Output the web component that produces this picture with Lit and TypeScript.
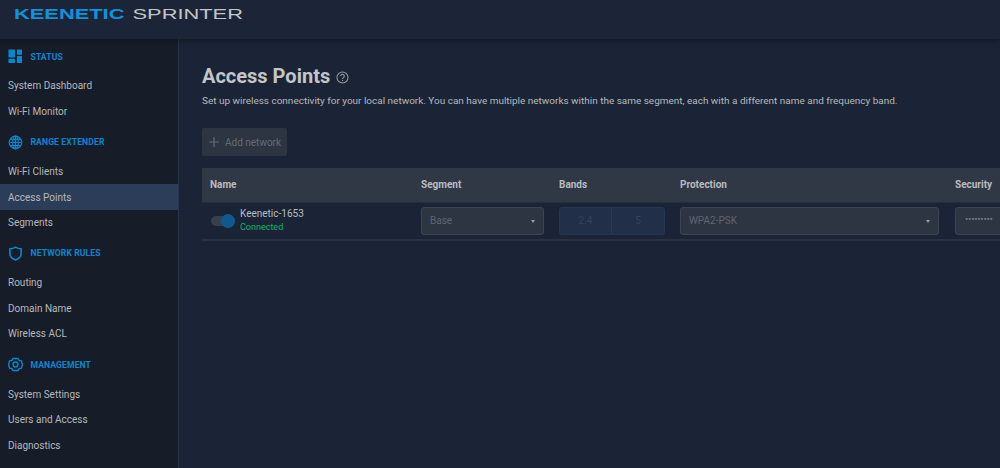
import { LitElement, html, css, svg } from "lit";
import { customElement } from "lit/decorators.js";

const icons: Record<string, unknown> = {
  status: svg`<path d="M.5 .5h7v8.500h-7zM9.500 .5h5.500v5.500H9.500zM.5 10.500h7v4.500h-7zM9.500 7.500h5.500V15H9.500z" fill="currentColor"/>`,
  globe: svg`<g fill="none" stroke="currentColor" stroke-width="1.300"><circle cx="8" cy="8" r="6.700"/><ellipse cx="8" cy="8" rx="3" ry="6.700"/><path d="M8 1.300v13.400M1.300 8h13.400M2.200 4.700h11.600M2.200 11.300h11.600"/></g>`,
  shield: svg`<path d="M8 1.200c1.800 1.200 3.800 1.800 6 1.900v5c0 3.400-2.400 5.600-6 6.900-3.600-1.300-6-3.500-6-6.900v-5c2.200-.1 4.200-.7 6-1.900z" fill="none" stroke="currentColor" stroke-width="1.700"/>`,
  gear: svg`<g fill="none" stroke="currentColor" stroke-width="1.500"><path d="M5.200 1.600h5.600l1.200 2.200 2.400.3L15.300 8l-.9 3.900-2.400.3-1.200 2.200H5.200L4 12.200l-2.400-.3L.7 8l.9-3.900L4 3.800z" stroke-linejoin="round"/><circle cx="8" cy="8" r="2.600"/></g>`,
};

const nav = [
  { icon: "status", title: "STATUS", items: ["System Dashboard", "Wi-Fi Monitor"] },
  { icon: "globe", title: "RANGE EXTENDER", items: ["Wi-Fi Clients", "Access Points", "Segments"] },
  { icon: "shield", title: "NETWORK RULES", items: ["Routing", "Domain Name", "Wireless ACL"] },
  { icon: "gear", title: "MANAGEMENT", items: ["System Settings", "Users and Access", "Diagnostics"] },
];

@customElement("app-root")
export class AppRoot extends LitElement {
  static styles = css`
    :host { display: block; width: 1000px; height: 468px; overflow: hidden; font-family: Roboto, "Liberation Sans", sans-serif; background: #1a2436; color: #c3c5c8; }
    .header { height: 39px; background: #1b2537; box-shadow: 0 2px 6px rgba(0,0,0,.3); position: relative; z-index: 1; padding: 6px 0 0 14px; box-sizing: border-box; display: flex; gap: 0; }
    .logo { font-family: "Liberation Sans", sans-serif; font-size: 14px; line-height: 16px; display: inline-block; transform-origin: left center; transform: scaleX(1.56); white-space: nowrap; }
    .k { color: #0e93dd; font-weight: 700; }
    .s { color: #c3c5c8; margin-left: 5.200px; }
    .body { display: flex; height: 429px; }
    .side { width: 178px; flex: none; background: #161c28; border-right: 1px solid #28344a; padding-top: 7.500px; box-sizing: content-box; }
    .sec { height: 20px; display: flex; align-items: center; gap: 7.500px; padding-left: 8px; color: #0b86cf; font-size: 8.600px; font-weight: 700; letter-spacing: .1px; margin-bottom: 6.500px; margin-top: 8px; }
    .section:first-child .sec { margin-top: 0; }
    .sec svg { width: 15px; height: 15px; flex: none; }
    .item { height: 25.600px; display: flex; align-items: center; padding-left: 8px; font-size: 10px; color: #b7b9bd; }
    .item.on { background: #2c3d59; }
    .main { flex: 1; min-width: 0; padding: 25px 0 0 23px; overflow: hidden; }
    .title { display: flex; align-items: center; gap: 6px; height: 24px; }
    h1 { margin: 0; font-size: 20px; font-weight: 700; color: #c3c5c8; line-height: 24px; }
    .q { width: 13px; height: 13px; color: #9a9ca1; margin-top: 2px; }
    p { margin: 6px 0 0; font-size: 9.970px; line-height: 14px; color: #b7b9bd; white-space: nowrap; }
    .add { margin-top: 20px; width: 85px; height: 28px; border-radius: 2px; background: #2d3543; color: #656b76; font-size: 10px; display: flex; align-items: center; gap: 5px; padding-left: 6px; box-sizing: border-box; }
    .add svg { width: 12px; height: 12px; }
    .table { margin-top: 12px; width: 900px; }
    .grid { display: grid; grid-template-columns: 219px 138px 121px 275px 147px; }
    .head { height: 35px; padding-bottom: 2px; background: #303845; border-bottom: 1px solid #252e3e; box-sizing: border-box; align-items: center; font-size: 10px; font-weight: 700; color: #b9bcc1; }
    .head > div:first-child { padding-left: 8px; }
    .row { height: 38px; padding-top: 4px; border-bottom: 2px solid #2a3241; box-sizing: border-box; align-items: start; }
    .name { display: flex; align-items: center; gap: 5px; padding-left: 9px; height: 27px; }
    .toggle { width: 24px; height: 14px; margin-top: 1px; position: relative; flex: none; }
    .track { position: absolute; left: 0; top: 2px; width: 24px; height: 10px; border-radius: 5px; background: #37404d; }
    .knob { position: absolute; right: 0; top: 0; width: 14px; height: 14px; border-radius: 50%; background: #10598e; }
    .ssid { font-size: 10px; line-height: 12px; color: #b9bcc1; }
    .conn { font-size: 9px; line-height: 14px; color: #11b564; }
    .sel { height: 28px; padding: 0 8px 2px 8px; background: #2d3543; border: 1px solid #3c4452; border-radius: 3px; box-sizing: border-box; display: flex; align-items: center; justify-content: space-between; font-size: 10px; color: #5f6671; }
    .sel i { width: 0; height: 0; margin-top: 2px; border-left: 2.500px solid transparent; border-right: 2.500px solid transparent; border-top: 3px solid #9a9ca1; }
    .s1 { width: 123px; }
    .s2 { width: 259px; }
    .bands { width: 106px; height: 28px; background: #212f48; border: 1px solid #263650; border-radius: 3px; box-sizing: border-box; display: grid; grid-template-columns: 1fr 1fr; font-size: 10px; color: #35425a; text-align: center; line-height: 26px; }
    .bands span:first-child { border-right: 1px solid #2a3a55; }
    .pw { width: 100px; height: 28px; background: #2d3543; border: 1px solid #3c4452; border-radius: 3px; box-sizing: border-box; padding-left: 9px; font-size: 10px; line-height: 24px; color: #6f7580; letter-spacing: -.3px; }
  `;

  render() {
    return html`
      <div class="header"><span class="logo"><span class="k">KEENETIC</span><span class="s">SPRINTER</span></span></div>
      <div class="body">
        <nav class="side">
          ${nav.map(
            (s) => html`<div class="section">
              <div class="sec"><svg viewBox="0 0 16 16">${icons[s.icon]}</svg>${s.title}</div>
              ${s.items.map((i) => html`<div class="item ${i === "Access Points" ? "on" : ""}">${i}</div>`)}
            </div>`
          )}
        </nav>
        <main class="main">
          <div class="title">
            <h1>Access Points</h1>
            <svg class="q" viewBox="0 0 16 16" fill="none" stroke="currentColor" stroke-width="1.300"><circle cx="8" cy="8" r="6.800"/><path d="M5.800 6.300a2.200 2.200 0 1 1 3.400 1.800c-.8.500-1.200 1-1.200 1.900M8 11v1.300"/></svg>
          </div>
          <p>Set up wireless connectivity for your local network. You can have multiple networks within the same segment, each with a different name and frequency band.</p>
          <div class="add"><svg viewBox="0 0 12 12" fill="none" stroke="#656b76" stroke-width="1.200"><path d="M6 1v10M1 6h10"/></svg>Add network</div>
          <div class="table">
            <div class="grid head"><div>Name</div><div>Segment</div><div>Bands</div><div>Protection</div><div>Security</div></div>
            <div class="grid row">
              <div class="name">
                <div class="toggle"><div class="track"></div><div class="knob"></div></div>
                <div><div class="ssid">Keenetic-1653</div><div class="conn">Connected</div></div>
              </div>
              <div><div class="sel s1">Base<i></i></div></div>
              <div><div class="bands"><span>2.4</span><span>5</span></div></div>
              <div><div class="sel s2">WPA2-PSK<i></i></div></div>
              <div><div class="pw">•••••••••</div></div>
            </div>
          </div>
        </main>
      </div>
    `;
  }
}
